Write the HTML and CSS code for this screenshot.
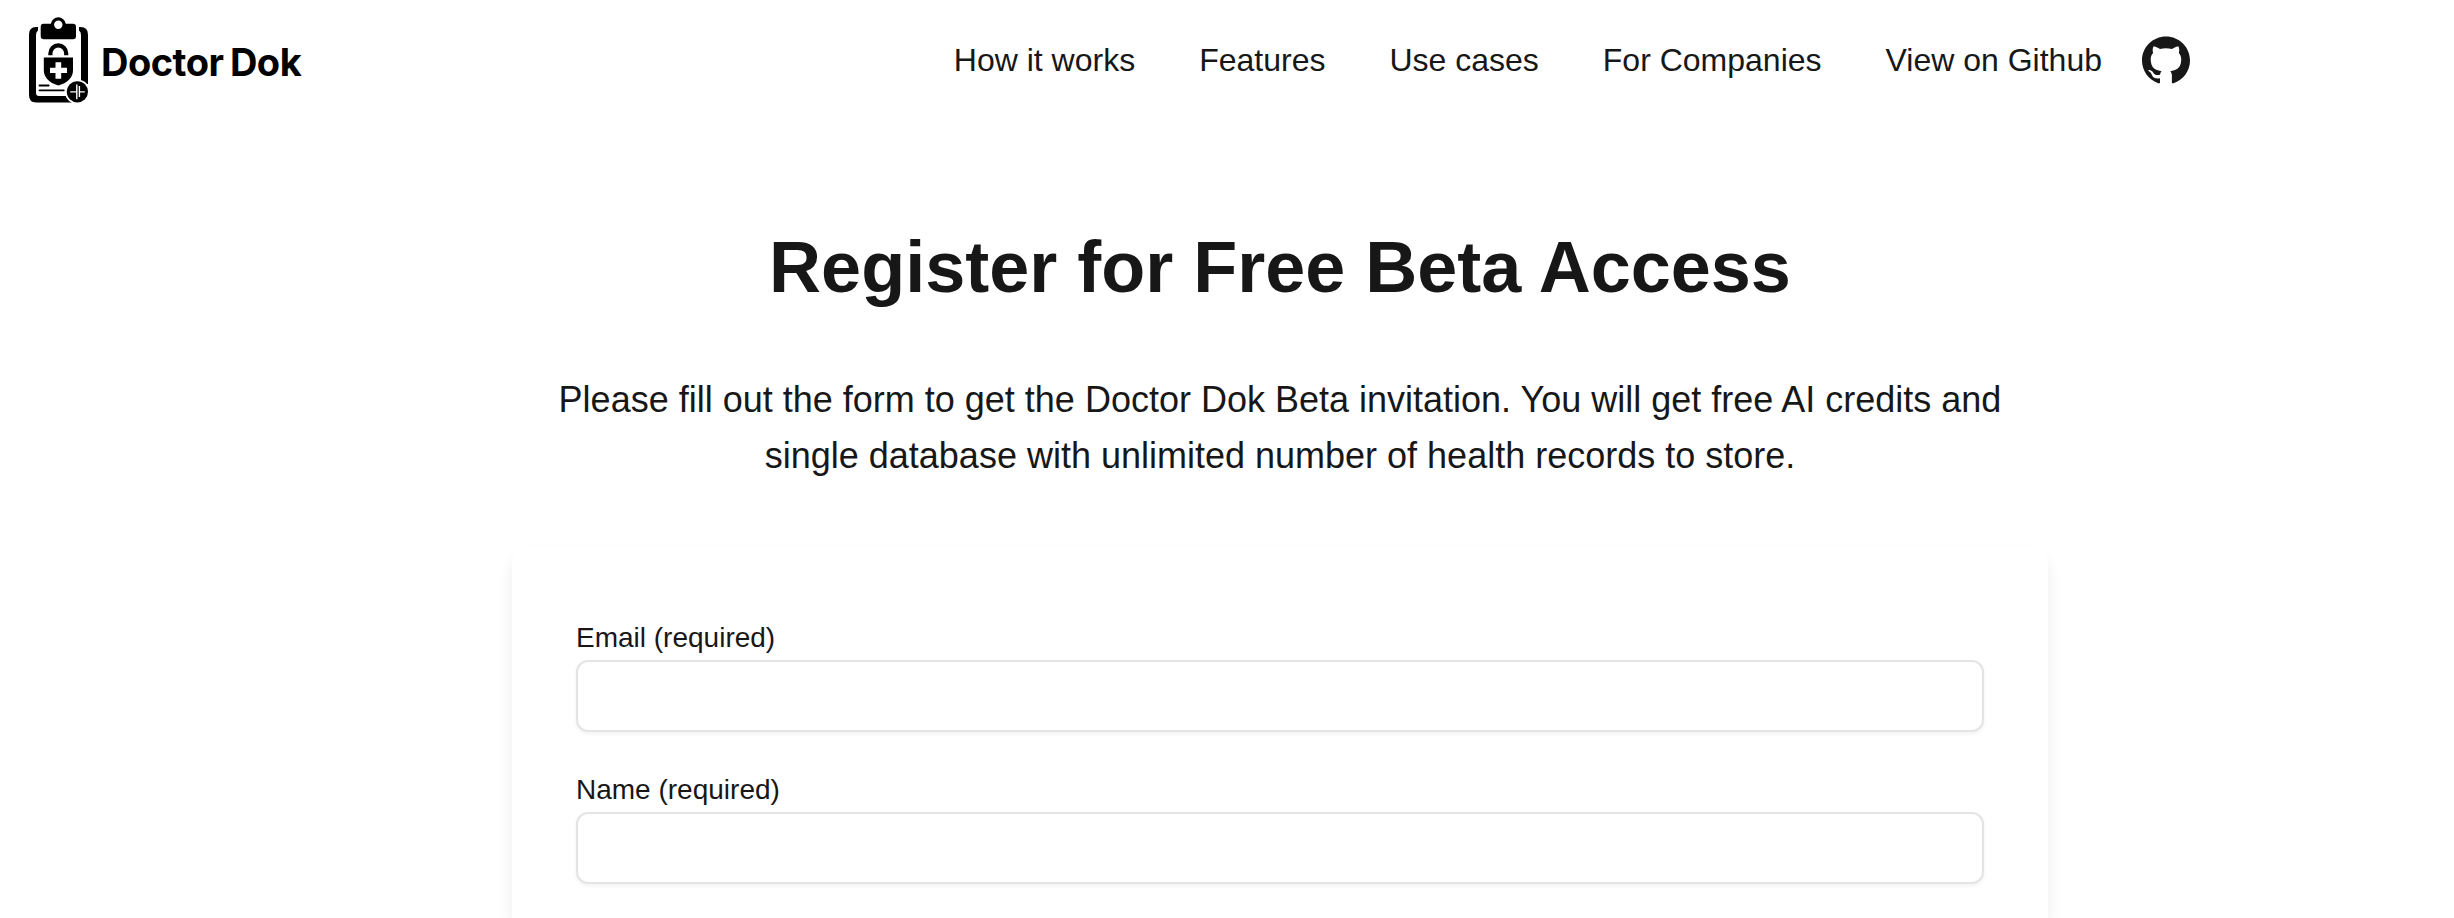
FILE: index.html
```html
<!DOCTYPE html>
<html lang="en">
<head>
<meta charset="utf-8">
<title>Doctor Dok</title>
<link rel="stylesheet" href="styles.css">
</head>
<body>
<header class="header">
  <a class="brand">
    <svg class="brand-icon" viewBox="0 0 80 100" width="80" height="100" aria-hidden="true">
      <path d="M18 17v3.500Q16 21.500 16 25V83Q16 86 19 86H58V92.400H16Q9 92.400 9 85V24.500Q9 17 16 17Z"/>
      <path d="M59 17H60.500Q68 17 68 24.500V74H61V25Q61 21.500 59 20.500Z"/>
      <path fill-rule="evenodd" d="M23.500 13.700H30.800A7.600 7.600 0 0 1 45.800 13.700H53Q56 13.700 56 17V26Q56 29.200 53 29.200H24Q20.700 29.200 20.700 26V17Q20.700 13.700 23.500 13.700ZM38.300 10.600a4.200 4.200 0 1 0 0 8.400a4.200 4.200 0 1 0 0-8.400Z"/>
      <path d="M30.400 45.200V43.300a7.900 7.900 0 0 1 15.800 0V45.200" fill="none" stroke="#000" stroke-width="4.200"/>
      <path d="M23.800 47.500H53V60Q53 71 38.400 75.600Q23.800 71 23.800 60Z"/>
      <path d="M35.500 52.300h5.700v5.400h5.800v5.400h-5.800v5.700h-5.700v-5.700h-5.500v-5.400h5.500Z" fill="#fff"/>
      <path d="M19.500 75.500H28.700M19.500 80.300H43.800" stroke="#000" stroke-width="1.800" fill="none" stroke-linecap="round"/>
      <circle cx="57.400" cy="81.800" r="12.400" fill="#fff"/>
      <circle cx="57.400" cy="81.800" r="10.600"/>
      <path d="M56.800 74.500V89.300M59.400 76V87M50.200 81.900H56.500M59.300 81.900H64.800" stroke="#fff" stroke-width="1.400" fill="none"/>
    </svg>
    <span class="brand-name">Doctor Dok</span>
  </a>
  <nav class="nav">
    <a>How it works</a>
    <a>Features</a>
    <a>Use cases</a>
    <a>For Companies</a>
    <a class="github">View on Github
      <svg viewBox="0 0 24 24" width="48" height="48" aria-hidden="true"><path fill="currentColor" d="M12 .297c-6.630 0-12 5.373-12 12 0 5.303 3.438 9.800 8.205 11.385.6.113.82-.258.82-.577 0-.285-.010-1.040-.015-2.040-3.338.724-4.042-1.610-4.042-1.610C4.422 18.070 3.633 17.700 3.633 17.700c-1.087-.744.084-.729.084-.729 1.205.084 1.838 1.236 1.838 1.236 1.070 1.835 2.809 1.305 3.495.998.108-.776.417-1.305.76-1.605-2.665-.3-5.466-1.332-5.466-5.930 0-1.310.465-2.380 1.235-3.220-.135-.303-.54-1.523.105-3.176 0 0 1.005-.322 3.300 1.230.96-.267 1.980-.399 3-.405 1.020.006 2.040.138 3 .405 2.280-1.552 3.285-1.230 3.285-1.230.645 1.653.24 2.873.12 3.176.765.84 1.230 1.910 1.230 3.220 0 4.610-2.805 5.625-5.475 5.920.42.36.81 1.096.81 2.220 0 1.606-.015 2.896-.015 3.286 0 .315.21.69.825.57C20.565 22.092 24 17.592 24 12.297c0-6.627-5.373-12-12-12"/></svg>
    </a>
  </nav>
</header>
<main class="main">
  <h1 class="title">Register for Free Beta Access</h1>
  <p class="intro">Please fill out the form to get the Doctor Dok Beta invitation. You will get free AI credits and single database with unlimited number of health records to store.</p>
  <form class="card">
    <div class="field">
      <label for="email">Email (required)</label>
      <input id="email" type="email">
    </div>
    <div class="field">
      <label for="name">Name (required)</label>
      <input id="name" type="text">
    </div>
  </form>
</main>
</body>
</html>
```
FILE: styles.css
```css
* { box-sizing: border-box; }
body {
  margin: 0;
  background: #fff;
  color: #171717;
  font-family: "Liberation Sans", Arial, sans-serif;
}
.header {
  display: flex;
  justify-content: space-between;
  align-items: center;
  height: 120px;
  padding: 0 264px 0 20px;
}
.brand { display: flex; align-items: center; color: #000; }
.brand-name {
  font: 650 38px/48px Inter, sans-serif;
  letter-spacing: -0.5px;
  word-spacing: -2px;
  padding: 4px 0 0 1px;
}
.nav { display: flex; gap: 64px; font-size: 32px; line-height: 48px; }
.github { display: flex; gap: 40px; }
.main {
  width: 1536px;
  height: 798px;
  margin: 0 0 0 512px;
  padding-top: 111px;
  display: flex;
  flex-direction: column;
}
.title { margin: 0 0 69px; font-size: 72px; line-height: 72px; text-align: center; }
.intro {
  margin: 0 0 62px;
  padding: 0 32px;
  font-size: 36px;
  line-height: 56px;
  text-align: center;
}
.card {
  flex: 1;
  padding: 71px 64px 0;
  border-radius: 16px 16px 0 0;
  background: #fff;
  box-shadow: 0 10px 16px rgba(0, 0, 0, .07);
  clip-path: inset(-20px -30px 0 -30px);
}
.field { margin-bottom: 37px; }
.field:last-child { margin-bottom: 0; }
.field label { display: block; margin-bottom: 2px; font-size: 28px; line-height: 41px; }
.field input {
  display: block;
  width: 100%;
  height: 72px;
  border: 2px solid #e4e4e7;
  border-radius: 12px;
  background: #fff;
  box-shadow: 0 2px 4px rgba(0, 0, 0, .05);
}
```
